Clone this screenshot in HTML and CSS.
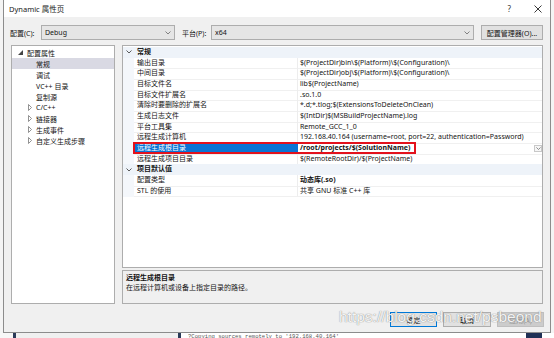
FILE: index.html
```html
<!DOCTYPE html>
<html lang="zh">
<head>
<meta charset="utf-8">
<title>Dynamic 属性页</title>
<link rel="stylesheet" href="styles.css">
</head>
<body>
<div class="screen">
  <div class="dialog">
    <div class="titlebar">
      <span class="title">Dynamic 属性页</span>
      <span class="tb-help">?</span>
      <svg class="tb-close" width="8" height="8" viewBox="0 0 8 8"><path d="M0.5 0.5L7.5 7.5M7.5 0.5L0.5 7.5" stroke="#222" stroke-width="0.9"/></svg>
    </div>
    <div class="content">
      <div class="toprow">
        <span class="lbl lbl-cfg">配置(C):</span>
        <div class="combo combo-cfg"><span>Debug</span><svg width="6" height="4" viewBox="0 0 6 4"><path d="M0.5 0.5L3 3L5.5 0.5" fill="none" stroke="#666" stroke-width="0.8"/></svg></div>
        <span class="lbl lbl-plat">平台(P):</span>
        <div class="combo combo-plat"><span>x64</span><svg width="6" height="4" viewBox="0 0 6 4"><path d="M0.5 0.5L3 3L5.5 0.5" fill="none" stroke="#666" stroke-width="0.8"/></svg></div>
        <div class="btn btn-mgr">配置管理器(O)...</div>
      </div>
      <div class="main">
        <div class="tree">
          <div class="ti lvl0"><svg class="tw" width="5" height="5" viewBox="0 0 5 5"><path d="M5 0L5 5L0 5Z" fill="#444"/></svg><span>配置属性</span></div>
          <div class="ti lvl1 sel"><span>常规</span></div>
          <div class="ti lvl1"><span>调试</span></div>
          <div class="ti lvl1"><span>VC++ 目录</span></div>
          <div class="ti lvl1"><span>复制源</span></div>
          <div class="ti lvl1 exp"><svg class="tc" width="4" height="7" viewBox="0 0 4 7"><path d="M0.5 0.5L3.5 3.5L0.5 6.5Z" fill="none" stroke="#777" stroke-width="0.8"/></svg><span>C/C++</span></div>
          <div class="ti lvl1 exp"><svg class="tc" width="4" height="7" viewBox="0 0 4 7"><path d="M0.5 0.5L3.5 3.5L0.5 6.5Z" fill="none" stroke="#777" stroke-width="0.8"/></svg><span>链接器</span></div>
          <div class="ti lvl1 exp"><svg class="tc" width="4" height="7" viewBox="0 0 4 7"><path d="M0.5 0.5L3.5 3.5L0.5 6.5Z" fill="none" stroke="#777" stroke-width="0.8"/></svg><span>生成事件</span></div>
          <div class="ti lvl1 exp"><svg class="tc" width="4" height="7" viewBox="0 0 4 7"><path d="M0.5 0.5L3.5 3.5L0.5 6.5Z" fill="none" stroke="#777" stroke-width="0.8"/></svg><span>自定义生成步骤</span></div>
        </div>
        <div class="rightcol">
          <div class="grid">
            <div class="prow hdr"><span class="gut"><svg width="6" height="4" viewBox="0 0 6 4"><path d="M0.5 0.5L3 3L5.5 0.5" fill="none" stroke="#333" stroke-width="0.8"/></svg></span><span class="hname">常规</span></div>
            <div class="prow"><span class="gut"></span><span class="name">输出目录</span><span class="val">$(ProjectDir)bin\$(Platform)\$(Configuration)\</span></div>
            <div class="prow"><span class="gut"></span><span class="name">中间目录</span><span class="val">$(ProjectDir)obj\$(Platform)\$(Configuration)\</span></div>
            <div class="prow"><span class="gut"></span><span class="name">目标文件名</span><span class="val">lib$(ProjectName)</span></div>
            <div class="prow"><span class="gut"></span><span class="name">目标文件扩展名</span><span class="val">.so.1.0</span></div>
            <div class="prow"><span class="gut"></span><span class="name">清除时要删除的扩展名</span><span class="val">*.d;*.tlog;$(ExtensionsToDeleteOnClean)</span></div>
            <div class="prow"><span class="gut"></span><span class="name">生成日志文件</span><span class="val">$(IntDir)$(MSBuildProjectName).log</span></div>
            <div class="prow"><span class="gut"></span><span class="name">平台工具集</span><span class="val">Remote_GCC_1_0</span></div>
            <div class="prow"><span class="gut"></span><span class="name">远程生成计算机</span><span class="val">192.168.40.164 (username=root, port=22, authentication=Password)</span></div>
            <div class="prow selrow"><span class="gut"></span><span class="name sel">远程生成根目录</span><span class="val bold"><span>/root/projects/$(SolutionName)</span><span class="ddbtn"><svg width="5" height="3" viewBox="0 0 5 3"><path d="M0.4 0.4L2.5 2.5L4.6 0.4" fill="none" stroke="#666" stroke-width="0.7"/></svg></span></span><span class="redbox"></span></div>
            <div class="prow"><span class="gut"></span><span class="name">远程生成项目目录</span><span class="val">$(RemoteRootDir)/$(ProjectName)</span></div>
            <div class="prow hdr"><span class="gut"><svg width="6" height="4" viewBox="0 0 6 4"><path d="M0.5 0.5L3 3L5.5 0.5" fill="none" stroke="#333" stroke-width="0.8"/></svg></span><span class="hname">项目默认值</span></div>
            <div class="prow"><span class="gut"></span><span class="name">配置类型</span><span class="val bold">动态库(.so)</span></div>
            <div class="prow"><span class="gut"></span><span class="name">STL 的使用</span><span class="val">共享 GNU 标准 C++ 库</span></div>
          </div>
          <div class="desc">
            <div class="desc-title">远程生成根目录</div>
            <div class="desc-text">在远程计算机或设备上指定目录的路径。</div>
          </div>
        </div>
      </div>
      <div class="buttons">
        <div class="btn btn-ok">确定</div>
        <div class="btn btn-cancel">取消</div>
        <div class="btn btn-apply">应用(A)</div>
      </div>
    </div>
  </div>
  <div class="below">
    <span class="b-gap1"></span><span class="b-bar"></span><span class="b-gap2"></span><span class="b-bar"></span>
    <span class="b-log">?Copying sources remotely to '192.168.40.164'</span>
    <span class="b-block"></span>
  </div>
  <div class="watermark">https://blog.csdn.net/psbeond</div>
</div>
</body>
</html>
```

FILE: styles.css
```css
body { margin: 0; }

.screen {
  width: 554px;
  height: 338px;
  position: relative;
  overflow: hidden;
  background: #f4f4f4;
  font-family: "Noto Sans", "Noto Sans CJK SC", sans-serif;
  font-size: 7px;
  color: #141414;
}

.dialog {
  margin-left: 3px;
  width: 548px;
  height: 333px;
  box-sizing: border-box;
  border: 1px solid #8c8c8c;
  border-top: 0;
  background: #f0f0f0;
  display: flex;
  flex-direction: column;
}

.titlebar {
  height: 17px;
  background: #fff;
  display: flex;
  align-items: center;
  padding-left: 5px;
  flex-shrink: 0;
}
.title { font-size: 7.5px; flex: 1; color: #222; }
.tb-help { font-size: 8px; color: #333; margin-right: 23px; }
.tb-close { margin-right: 8px; }

.content {
  flex: 1;
  padding: 8px 7px 0 7px;
  display: flex;
  flex-direction: column;
}

.toprow { display: flex; height: 15px; align-items: center; }
.lbl { flex-shrink: 0; }
.lbl-cfg { width: 30px; margin-left: -1px; padding-right: 1px; }
.lbl-plat { width: 29px; margin-left: 7px; }
.combo {
  height: 15px;
  box-sizing: border-box;
  border: 1px solid #adadad;
  background: #e5e5e5;
  display: flex;
  align-items: center;
  justify-content: space-between;
  padding: 0 3px 0 3px;
}
.combo-cfg { width: 134px; }
.combo-plat { width: 263px; }

.btn {
  height: 15px;
  box-sizing: border-box;
  border: 1px solid #adadad;
  background: #e1e1e1;
  display: flex;
  align-items: center;
  justify-content: center;
}
.btn-mgr { width: 62px; margin-left: 7px; }

.main { display: flex; gap: 7px; height: 259px; margin-top: 5px; }

.tree {
  width: 104px;
  box-sizing: border-box;
  border: 1px solid #adadad;
  background: #fff;
  padding-top: 1px;
}
.ti { height: 11px; display: flex; align-items: center; }
.lvl0 { padding-left: 6px; }
.lvl0 .tw { margin-right: 4px; }
.lvl1 { padding-left: 24px; }
.lvl1.exp { padding-left: 16px; }
.lvl1.exp .tc { margin-right: 4px; }
.ti.sel { background: #d9d9e3; }

.rightcol { flex: 1; display: flex; flex-direction: column; gap: 2px; }

.grid {
  height: 223px;
  box-sizing: border-box;
  border: 1px solid #adadad;
  background: #fff;
  padding-top: 1px;
}
.prow {
  position: relative;
  display: grid;
  grid-template-columns: 11px 164px 1fr;
  height: 10.67px;
  line-height: 10.67px;
}
.gut { background: #f4f7fb; display: flex; align-items: center; justify-content: center; }
.name {
  padding-left: 3px;
  border-right: 1px solid #ededed;
  border-bottom: 1px solid #f0f0f0;
  white-space: nowrap;
}
.val {
  padding-left: 2px;
  border-bottom: 1px solid #f0f0f0;
  white-space: nowrap;
  overflow: hidden;
}
.hdr { background: #eef3f9; }
.hdr .gut { background: #eef3f9; }
.hname { grid-column: 2 / 4; padding-left: 3px; font-weight: bold; }
.bold { font-weight: bold; }
.name.sel { background: #0a74d4; color: #fff; border-right-color: #0a74d4; }
.selrow .val { display: flex; justify-content: space-between; align-items: center; }
.ddbtn {
  width: 8px;
  height: 7px;
  box-sizing: border-box;
  border: 1px solid #c8c8c8;
  background: #f6f6f6;
  display: flex;
  align-items: center;
  justify-content: center;
}
.redbox {
  position: absolute;
  left: 10px;
  top: -1px;
  width: 283px;
  height: 12px;
  box-sizing: border-box;
  border: 2px solid #e3121c;
  pointer-events: none;
}

.desc {
  flex: 1;
  box-sizing: border-box;
  border: 1px solid #adadad;
  background: #f0f0f0;
  padding: 2px 0 0 3px;
  line-height: 10px;
}
.desc-title { font-weight: bold; }

.buttons {
  display: flex;
  justify-content: flex-end;
  gap: 6px;
  margin-top: 8px;
  margin-right: -1px;
}
.btn-ok { width: 47px; border-color: #0078d7; }
.btn-cancel { width: 48px; }
.btn-apply { width: 47px; color: #9a9a9a; background: #cccccc; border-color: #bfbfbf; }

.below { display: flex; height: 5px; overflow: hidden; background: #fff; }
.b-gap1 { width: 13px; background: #f7f7f7; }
.b-bar { width: 3px; background: #2a3a58; }
.b-gap2 { width: 162px; background: #f0f0f0; }
.b-log {
  width: 338px;
  padding-left: 7px;
  font-family: "Liberation Mono", monospace;
  font-size: 5.6px;
  line-height: 8px;
  color: #555;
  white-space: nowrap;
  overflow: hidden;
}
.b-block { width: 16px; background: #1f3055; }

.watermark {
  position: absolute;
  left: 339px;
  top: 308px;
  font-family: "Liberation Sans", sans-serif;
  font-size: 15.5px;
  color: rgba(255, 255, 255, 0.92);
  text-shadow: 0 0 1px rgba(110, 110, 110, 0.7), 0 0 1px rgba(110, 110, 110, 0.5);
  white-space: nowrap;
}
```
